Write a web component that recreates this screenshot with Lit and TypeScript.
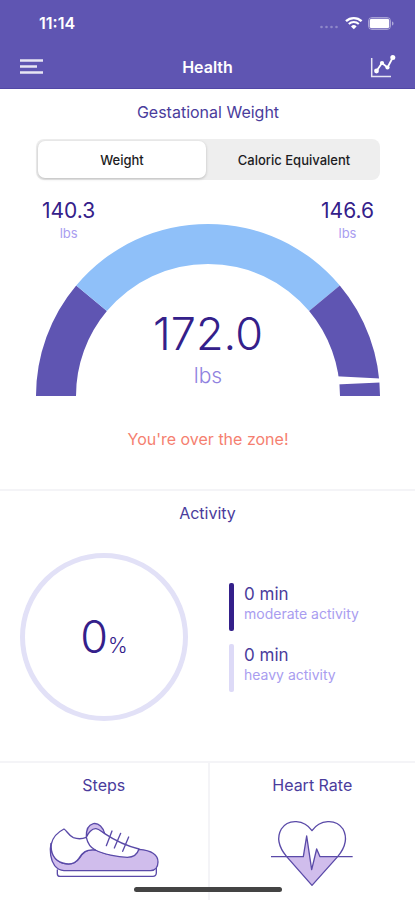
import { LitElement, html, css } from "lit";
import { customElement, state } from "lit/decorators.js";

@customElement("status-bar")
class StatusBar extends LitElement {
  static styles = css`
    :host { display: flex; align-items: center; justify-content: space-between; height: 46px; padding: 0 21px 0 39px; color: #fff; }
    .time { font-size: 16px; line-height: 20px; font-weight: 600; }
    .indicators { display: flex; align-items: center; }
    svg { display: block; }
  `;
  render() {
    return html`
      <span class="time">11:14</span>
      <span class="indicators">
        <svg width="74" height="16" viewBox="0 0 74 16" fill="none" aria-hidden="true">
          <g fill="#fff" fill-opacity=".3">
            <circle cx="1.5" cy="12" r="1.3" /><circle cx="6.5" cy="12" r="1.3" />
            <circle cx="11.5" cy="12" r="1.3" /><circle cx="16.5" cy="12" r="1.3" />
          </g>
          <path d="M26 6.2a11.4 11.4 0 0 1 15.6 0" stroke="#fff" stroke-width="2.4" />
          <path d="M28.8 9a7.4 7.4 0 0 1 10 0" stroke="#fff" stroke-width="2.1" />
          <path d="M31 11.4a4 4 0 0 1 5.6 0L33.8 14.2z" fill="#fff" />
          <rect x="48.5" y="2.5" width="22" height="12" rx="3.5" stroke="#fff" stroke-opacity=".45" />
          <rect x="49.7" y="3.7" width="19.6" height="9.6" rx="2" fill="#fff" />
          <path d="M72 6.5v4c2-.6 2-3.4 0-4z" fill="#fff" fill-opacity=".5" />
        </svg>
      </span>
    `;
  }
}

@customElement("weight-gauge")
class WeightGauge extends LitElement {
  static styles = css`
    :host { display: grid; color: #34208a; }
    .dial, .limits, .reading { grid-area: 1 / 1; }
    .dial { align-self: end; display: block; width: 100%; margin-top: 26px; }
    .limits { display: flex; justify-content: space-between; align-items: flex-start; padding: 0 6px; }
    .limit { display: flex; flex-direction: column; align-items: center; }
    .value { font-size: 21px; line-height: 28px; font-weight: 400; }
    .unit { font-size: 13px; line-height: 16px; color: #a99df0; }
    .reading { align-self: end; justify-self: center; display: flex; flex-direction: column; align-items: center; padding-bottom: 6px; }
    .current { font-size: 45px; line-height: 56px; font-weight: 300; }
    .current-unit { font-size: 21px; line-height: 28px; font-weight: 300; color: #8f82e0; }
  `;
  render() {
    return html`
      <svg class="dial" viewBox="0 0 344 173" aria-hidden="true">
        <path d="M0 173A172 172 0 0 1 40.2 62.4L70.9 88.1A132 132 0 0 0 40 173z" fill="#5f55b2" />
        <path d="M40.2 62.4A172 172 0 0 1 303.8 62.4L273.1 88.1A132 132 0 0 0 70.9 88.1z" fill="#8fc0f9" />
        <path d="M303.8 62.4A172 172 0 0 1 344 173L304 173A132 132 0 0 0 273.1 88.1z" fill="#5f55b2" />
        <path d="M300 153.2L344 155.4V159.4L300 161.4z" fill="#fff" />
      </svg>
      <div class="limits">
        <div class="limit"><span class="value">140.3</span><span class="unit">lbs</span></div>
        <div class="limit"><span class="value">146.6</span><span class="unit">lbs</span></div>
      </div>
      <div class="reading"><span class="current">172.0</span><span class="current-unit">lbs</span></div>
    `;
  }
}

@customElement("app-root")
class AppRoot extends LitElement {
  @state() private mode = "Weight";

  static styles = css`
    :host { display: flex; flex-direction: column; min-height: 100vh; box-sizing: border-box; background: #fff; color: #4a3c9c; font-family: Inter, "Liberation Sans", sans-serif; font-size: 16px; line-height: 20px; }
    h1, h2, p { margin: 0; font-size: inherit; font-weight: 400; }
    svg { display: block; }
    header { background: #5f55b2; border-bottom: 1px solid #5147a6; }
    .nav { display: grid; grid-template-columns: 1fr auto 1fr; align-items: center; height: 42px; padding: 0 19px; color: #fff; }
    h1 { font-weight: 600; }
    .icon-button { display: block; padding: 0; border: 0; background: none; color: inherit; cursor: pointer; }
    .icon-button.end { justify-self: end; }
    h2 { text-align: center; }
    .weight { display: flex; flex-direction: column; padding: 13px 35px 40px 36px; }
    .segments { display: grid; grid-template-columns: 1fr 1fr; column-gap: 4px; margin: 17px 0; padding: 2px; border-radius: 8px; background: #eee; }
    .segment { height: 37px; padding: 0; border: 0; border-radius: 7px; background: none; color: #1c1c1e; font: 500 13px/20px Inter, "Liberation Sans", sans-serif; cursor: pointer; }
    .segment.active { background: #fff; box-shadow: 0 1px 3px rgba(0, 0, 0, 0.22); }
    .notice { margin-top: 33px; text-align: center; color: #f57f70; }
    .activity { border-top: 2px solid #f4f4f7; padding: 12px 20px 40px; }
    .activity-body { display: grid; grid-template-columns: 168px 1fr; column-gap: 41px; align-items: center; margin-top: 30px; }
    .ring { display: flex; align-items: center; justify-content: center; box-sizing: border-box; width: 168px; height: 168px; padding-top: 8px; border: 5px solid #e2e1f7; border-radius: 50%; color: #34208a; }
    .percent { font-size: 45px; line-height: 56px; font-weight: 300; }
    .percent small { font-size: 21px; }
    .legend { display: grid; row-gap: 13px; }
    .entry { display: flex; gap: 10px; }
    .bar { width: 5px; border-radius: 2px; background: #34208a; }
    .bar.light { background: #dddaf7; }
    .entry-text { padding: 1px 0 7px; }
    .amount { font-size: 17px; color: #4a3c9c; }
    .kind { font-size: 14px; color: #a99df0; }
    .cards { display: grid; grid-template-columns: 1fr 1fr; flex: 1; border-top: 2px solid #f4f4f7; }
    .card { display: flex; flex-direction: column; align-items: center; padding: 12px 0; }
    .card + .card { border-left: 2px solid #f4f4f7; }
    .card svg { margin-top: 25px; }
    .home { position: fixed; bottom: 8px; left: 50%; width: 148px; height: 5px; margin-left: -74px; border-radius: 3px; background: #444; }
  `;

  private segment(name: string) {
    const active = this.mode === name;
    return html`<button class="segment ${active ? "active" : ""}" aria-pressed=${active} @click=${() => (this.mode = name)}>${name}</button>`;
  }

  render() {
    return html`
      <header>
        <status-bar></status-bar>
        <div class="nav">
          <button class="icon-button" aria-label="Menu">
            <svg width="24" height="18" viewBox="0 0 24 18" stroke="#fff" stroke-opacity=".85" stroke-width="2.6">
              <path d="M1 2.5h23M1 8.5h17M1 14.5h23" />
            </svg>
          </button>
          <h1>Health</h1>
          <button class="icon-button end" aria-label="Charts">
            <svg width="26" height="26" viewBox="0 0 26 26" fill="none" stroke="#fff">
              <path d="M1.7 4v18.6H21" stroke-width="1.5" stroke-opacity=".85" />
              <path d="M6.5 17L12 9L17.5 13.5L22.8 3.5" stroke-width="1.8" />
              <g fill="#fff" stroke="none"><circle cx="6.5" cy="17" r="2.4" /><circle cx="12" cy="9" r="2.1" /><circle cx="17.5" cy="13.5" r="2.1" /><circle cx="22.8" cy="3.5" r="2.5" /></g>
            </svg>
          </button>
        </div>
      </header>

      <section class="weight">
        <h2>Gestational Weight</h2>
        <div class="segments">${this.segment("Weight")}${this.segment("Caloric Equivalent")}</div>
        <weight-gauge></weight-gauge>
        <p class="notice">You're over the zone!</p>
      </section>

      <section class="activity">
        <h2>Activity</h2>
        <div class="activity-body">
          <div class="ring"><span class="percent">0<small>%</small></span></div>
          <div class="legend">
            <div class="entry"><span class="bar"></span><div class="entry-text"><p class="amount">0 min</p><p class="kind">moderate activity</p></div></div>
            <div class="entry"><span class="bar light"></span><div class="entry-text"><p class="amount">0 min</p><p class="kind">heavy activity</p></div></div>
          </div>
        </div>
      </section>

      <section class="cards">
        <div class="card">
          <h2>Steps</h2>
          <svg width="112" height="58" viewBox="24 207 336 174" fill="none" stroke="#5a4aa8" stroke-width="4" stroke-linecap="round" stroke-linejoin="round" aria-hidden="true">
            <path d="M52 357V368Q52 376 60 376H339Q348 376 349 366V352" fill="#fff" />
            <path d="M33 277C28 300 32 328 44 344Q55 358 72 359H332C346 358 354 347 354 333C354 311 334 298 297 295L275 316L196 308L165 296C140 294 130 304 118 322C108 336 96 342 70 337C46 331 32 307 33 277z" fill="#d0bdec" />
            <path d="M139 259C138 236 144 222 160 218C176 215 190 229 194 248L178 240z" fill="#d0bdec" />
            <path d="M72 234C80 238 86 254 100 260Q120 267 139 259C144 246 156 232 168 233C178 234 184 242 194 248C218 264 256 284 297 294C292 310 280 319 262 319C232 318 190 309 166 297C138 294 128 304 116 323C106 338 88 342 68 336C42 328 31 305 34 279C39 256 56 242 72 234z" fill="#fff" />
            <path d="M139 259C143 278 152 290 166 297" />
            <path d="M216 240L199 284M242 247L223 291M266 258L248 301" />
          </svg>
        </div>
        <div class="card">
          <h2>Heart Rate</h2>
          <svg width="84" height="67" viewBox="207 197 252 201" fill="none" stroke="#5a4aa8" stroke-width="4" stroke-linejoin="round" aria-hidden="true">
            <path d="M257 307H307L317 245L332 346L347 284L357 307H409L333 393z" fill="#d0bdec" stroke="none" />
            <path d="M333 229C310 195 261 192 241 224C226 250 233 278 257 307L333 393L410 307C434 278 440 250 426 224C405 192 356 195 333 229z" />
            <path d="M210 307H307L317 245L332 346L347 284L357 307H455" />
          </svg>
        </div>
      </section>
      <div class="home"></div>
    `;
  }
}
